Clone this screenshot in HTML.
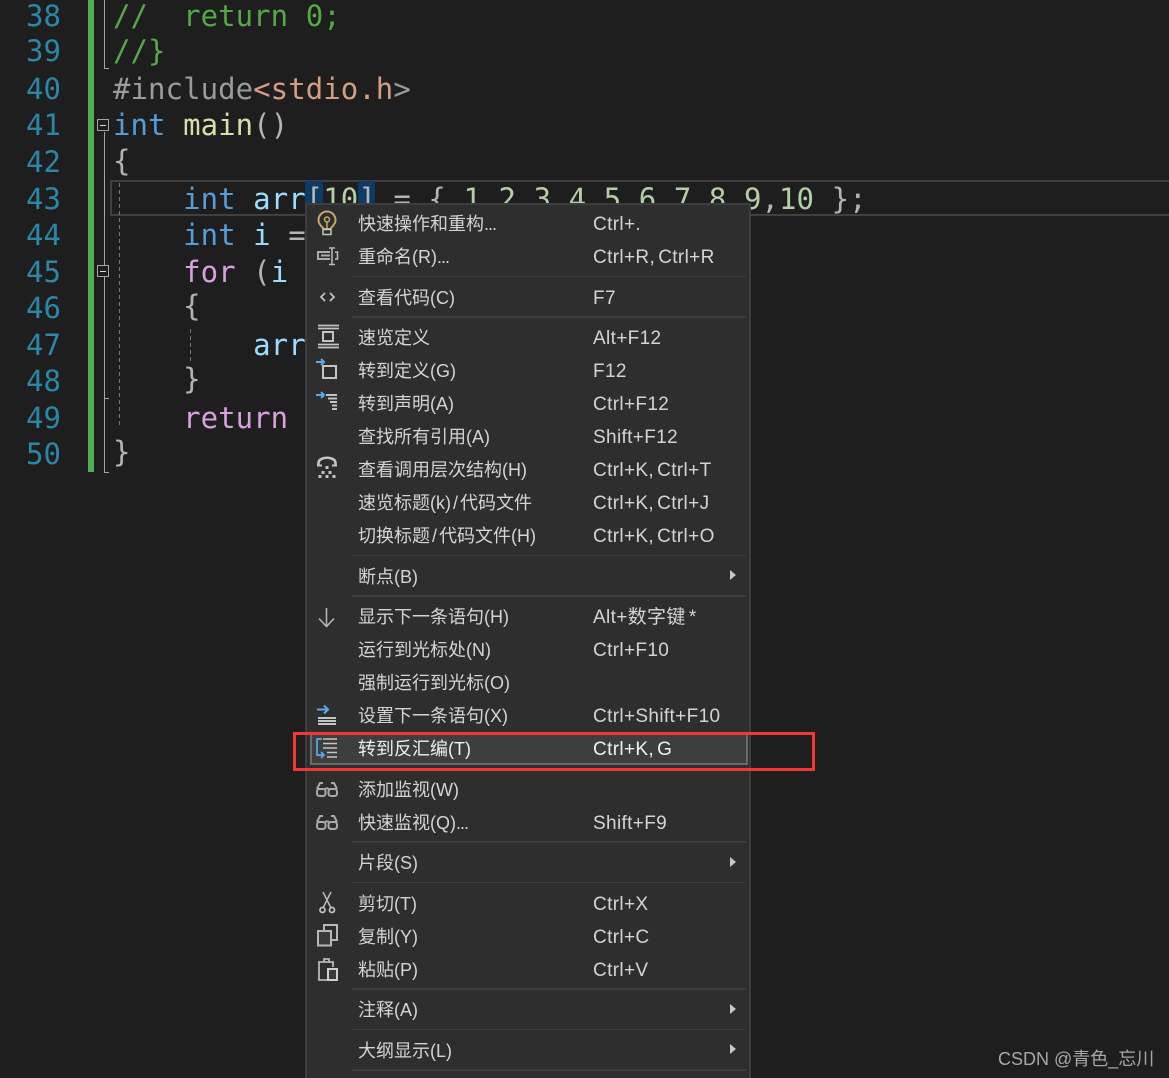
<!DOCTYPE html>
<html><head><meta charset="utf-8"><style>
html,body{margin:0;padding:0;background:#1e1e1e}
#p{position:relative;width:1169px;height:1078px;overflow:hidden;background:#1e1e1e}
.n,.c{position:absolute;font:29px/36px "DejaVu Sans Mono","Liberation Mono",monospace;white-space:pre;letter-spacing:.06px}
.n{left:26px;color:#2b87a8}
.c{left:113px;color:#dcdcdc}
.g{color:#57a64a}.b{color:#569cd6}.y{color:#dcdcaa}.v{color:#9cdcfe}.s{color:#d69d85}.h{color:#9b9b9b}.k{color:#d8a0df}.l{color:#b5cea8}.w{color:#b4b4b4}
.r{position:absolute;left:0;top:0;width:1169px;height:1078px;pointer-events:none}
#m{position:absolute;left:305px;top:203px;width:446px;height:880px;background:#2e2e2e;border-left:2px solid #3d3d3d;border-right:2px solid #3d3d3d;border-top:2px solid #3d3d3d;box-sizing:border-box}
.t,.u{position:absolute;margin-top:1px;color:#d4d4d4;white-space:pre}
.t{left:358px;font:18px/33px "Liberation Sans","Noto Sans CJK SC",sans-serif}
.u{left:593px;font:19px/33px "Liberation Sans","Noto Sans CJK SC",sans-serif;letter-spacing:.35px;word-spacing:-2.500px}
.d{letter-spacing:-1px}.sl{margin:0 2px}
.sp{position:absolute;left:352px;width:394px;background:#3c3c3c}
.a{position:absolute;left:730px;width:0;height:0;border-left:6px solid #c8c8c8;border-top:5.500px solid transparent;border-bottom:5.500px solid transparent}
</style></head><body><div id="p">
<div style="position:absolute;left:88px;top:0;width:6px;height:472px;background:#4fb056"></div>
<div style="position:absolute;left:110px;top:180px;width:1059px;height:36px;border:2px solid #404040;box-sizing:border-box;border-right:0"></div>
<div style="position:absolute;left:305px;top:181px;width:18px;height:24px;background:#0e3b63"></div>
<div style="position:absolute;left:358px;top:181px;width:17px;height:24px;background:#0e3b63"></div>

<svg class="r" viewBox="0 0 1169 1078" fill="none" stroke="#a5a5a5" stroke-width="1">
<path d="M104.500 0V68.500H109M104.500 132V472.500H109M104.500 398.500H109"/>
<rect x="97.500" y="119.500" width="11" height="11" fill="#1e1e1e" stroke="#a5a5a5"/><path d="M100 125.500H106" stroke="#ddd"/>
<rect x="97.500" y="265.500" width="11" height="11" fill="#1e1e1e" stroke="#a5a5a5"/><path d="M100 271.500H106" stroke="#ddd"/>
<path d="M119.500 183V428M190.500 329V364" stroke="#777" stroke-dasharray="4 3"/>
</svg>

<div class="n" style="top:-2px">38</div><div class="c g" style="top:-2px">//  return 0;</div>
<div class="n" style="top:33px">39</div><div class="c g" style="top:33px">//}</div>
<div class="n" style="top:71px">40</div><div class="c" style="top:71px"><span class="h">#include</span><span class="s">&lt;stdio.h</span><span class="h">&gt;</span></div>
<div class="n" style="top:107px">41</div><div class="c" style="top:107px"><span class="b">int</span> <span class="y">main</span><span class="w">()</span></div>
<div class="n" style="top:144px">42</div><div class="c w" style="top:143px">{</div>
<div class="n" style="top:181px">43</div><div class="c" style="top:181px">    <span class="b">int</span> <span class="v">arr</span><span class="w">[</span><span class="l">10</span><span class="w">] = { </span><span class="l">1</span><span class="w">,</span><span class="l">2</span><span class="w">,</span><span class="l">3</span><span class="w">,</span><span class="l">4</span><span class="w">,</span><span class="l">5</span><span class="w">,</span><span class="l">6</span><span class="w">,</span><span class="l">7</span><span class="w">,</span><span class="l">8</span><span class="w">,</span><span class="l">9</span><span class="w">,</span><span class="l">10</span><span class="w"> };</span></div>
<div class="n" style="top:217px">44</div><div class="c" style="top:217px">    <span class="b">int</span> <span class="v">i</span> <span class="w">=</span></div>
<div class="n" style="top:254px">45</div><div class="c" style="top:254px">    <span class="k">for</span> <span class="w">(</span><span class="v">i</span></div>
<div class="n" style="top:290px">46</div><div class="c w" style="top:288px">    {</div>
<div class="n" style="top:327px">47</div><div class="c v" style="top:327px">        arr</div>
<div class="n" style="top:363px">48</div><div class="c w" style="top:361px">    }</div>
<div class="n" style="top:400px">49</div><div class="c k" style="top:400px">    return</div>
<div class="n" style="top:436px">50</div><div class="c w" style="top:434px">}</div>

<div id="m"></div>
<div style="position:absolute;left:310px;top:733px;width:438px;height:32px;box-sizing:border-box;background:#3e3e3e;border:2px solid #6a6a6a"></div>

<div class="sp" style="top:276px;height:1px"></div>
<div class="sp" style="top:316px;height:2px"></div>
<div class="sp" style="top:555px;height:1px"></div>
<div class="sp" style="top:595px;height:2px"></div>
<div class="sp" style="top:841px;height:2px"></div>
<div class="sp" style="top:882px;height:1px"></div>
<div class="sp" style="top:988px;height:2px"></div>
<div class="sp" style="top:1029px;height:1px"></div>
<div class="sp" style="top:1069px;height:2px"></div>

<div class="t" style="top:207px">快速操作和重构<span class="d">...</span></div><div class="u" style="top:207px">Ctrl+.</div>
<div class="t" style="top:240px">重命名(R)<span class="d">...</span></div><div class="u" style="top:240px">Ctrl+R, Ctrl+R</div>
<div class="t" style="top:281px">查看代码(C)</div><div class="u" style="top:281px">F7</div>
<div class="t" style="top:321px">速览定义</div><div class="u" style="top:321px">Alt+F12</div>
<div class="t" style="top:354px">转到定义(G)</div><div class="u" style="top:354px">F12</div>
<div class="t" style="top:387px">转到声明(A)</div><div class="u" style="top:387px">Ctrl+F12</div>
<div class="t" style="top:420px">查找所有引用(A)</div><div class="u" style="top:420px">Shift+F12</div>
<div class="t" style="top:453px">查看调用层次结构(H)</div><div class="u" style="top:453px">Ctrl+K, Ctrl+T</div>
<div class="t" style="top:486px">速览标题(k)<span class="sl">/</span>代码文件</div><div class="u" style="top:486px">Ctrl+K, Ctrl+J</div>
<div class="t" style="top:519px">切换标题<span class="sl">/</span>代码文件(H)</div><div class="u" style="top:519px">Ctrl+K, Ctrl+O</div>
<div class="t" style="top:560px">断点(B)</div><div class="a" style="top:570px"></div>
<div class="t" style="top:600px">显示下一条语句(H)</div><div class="u" style="top:600px">Alt+数字键 *</div>
<div class="t" style="top:633px">运行到光标处(N)</div><div class="u" style="top:633px">Ctrl+F10</div>
<div class="t" style="top:666px">强制运行到光标(O)</div>
<div class="t" style="top:699px">设置下一条语句(X)</div><div class="u" style="top:699px">Ctrl+Shift+F10</div>
<div class="t" style="top:732px;color:#f0f0f0">转到反汇编(T)</div><div class="u" style="top:732px;color:#f0f0f0">Ctrl+K, G</div>
<div class="t" style="top:773px">添加监视(W)</div>
<div class="t" style="top:806px">快速监视(Q)<span class="d">...</span></div><div class="u" style="top:806px">Shift+F9</div>
<div class="t" style="top:846px">片段(S)</div><div class="a" style="top:857px"></div>
<div class="t" style="top:887px">剪切(T)</div><div class="u" style="top:887px">Ctrl+X</div>
<div class="t" style="top:920px">复制(Y)</div><div class="u" style="top:920px">Ctrl+C</div>
<div class="t" style="top:953px">粘贴(P)</div><div class="u" style="top:953px">Ctrl+V</div>
<div class="t" style="top:993px">注释(A)</div><div class="a" style="top:1004px"></div>
<div class="t" style="top:1034px">大纲显示(L)</div><div class="a" style="top:1044px"></div>

<svg class="r" viewBox="0 0 1169 1078" fill="none" stroke="#c4c4c4" stroke-width="2">
<!-- bulb -->
<path d="M323.500 229c-1-2.500-5-4-5-9a8.500 8.500 0 0 1 17 0c0 5-4 6.500-5 9z" stroke="#c5a86f" stroke-width="2"/>
<circle cx="327" cy="219.500" r="2.500" stroke="#c5a86f" stroke-width="1.500"/>
<path d="M327 222v7" stroke="#c5a86f" stroke-width="1.500"/>
<rect x="323" y="229.500" width="8" height="5" stroke-width="1.500"/>
<!-- rename -->
<path d="M330 252H318v7h12M321 255.500h9" stroke="#aaa"/>
<path d="M329 248h6M329 264.500h6M332 248v16M335 252h2.500v7H335" stroke="#bbb" stroke-width="1.500"/>
<!-- code -->
<path d="M325 293l-4 4 4 4M330 293l4 4-4 4" stroke-width="1.700"/>
<!-- peek -->
<path d="M318 325.500h21M318 328.500h21M318 344.500h21M318 347.500h21" stroke-width="1.700"/>
<rect x="323" y="332" width="10" height="9"/>
<!-- go to definition -->
<rect x="323" y="366" width="13" height="12"/>
<path d="M316 362h8M321 359l3 3-3 3" stroke="#5ba8ee"/>
<!-- go to declaration -->
<path d="M316 395h8M321 392l3 3-3 3" stroke="#5ba8ee"/>
<path d="M326 395h11M328 398.500h9M330 402h7M332 405.500h5M332 409h5"/>
<!-- call hierarchy -->
<path d="M318.500 465v-2c0-7 17-7 17 0v2" stroke-width="2.600"/>
<path d="M317 465.500h5M332 465.500h5" stroke-width="2"/>
<g fill="#c4c4c4" stroke="none"><rect x="325.500" y="466" width="3" height="3"/><rect x="321.500" y="471" width="3" height="3"/><rect x="328.500" y="471" width="3" height="3"/><rect x="318.500" y="475" width="3" height="3"/><rect x="325.500" y="475" width="3" height="3"/><rect x="332.500" y="475" width="3" height="3"/></g>
<!-- arrow down -->
<path d="M326.500 608v18M319 618.500l7.500 8 7.500-8" stroke="#b8b8b8" stroke-width="1.500"/>
<!-- set next -->
<path d="M317 709.500h11M324 705.500l4 4-4 4" stroke="#5ba8ee"/>
<path d="M318 718h18M318 721h18M318 724h18"/>
<!-- disasm -->
<path d="M322 739h-5v16h7M321 752l3 3-3 3" stroke="#5ba8ee" stroke-width="1.700"/>
<path d="M323 739h14M323 743.500h14M323 748h14M327 752.500h10M327 757h10" stroke-width="1.500"/>
<!-- glasses -->
<g stroke="#aaa"><path d="M325 789.500c1-1.500 3-1.500 4 0M317 789l3-6h3M337 789l-3-6h-3"/><rect x="317" y="789" width="8.500" height="7" rx="2.500"/><rect x="328.500" y="789" width="8.500" height="7" rx="2.500"/></g>
<g stroke="#aaa"><path d="M325 822.500c1-1.500 3-1.500 4 0M317 822l3-6h3M337 822l-3-6h-3"/><rect x="317" y="822" width="8.500" height="7" rx="2.500"/><rect x="328.500" y="822" width="8.500" height="7" rx="2.500"/></g>
<!-- scissors -->
<path d="M323 892l8 16M331 892l-8 16" stroke="#bbb" stroke-width="1.500"/>
<circle cx="322.500" cy="910" r="2.500" stroke-width="1.700"/><circle cx="332" cy="910" r="2.500" stroke-width="1.700"/>
<!-- copy -->
<path d="M324 930v-5h13v15h-6" stroke="#b8b8b8"/>
<rect x="318" y="931" width="13" height="14.500" fill="#3a3a3a" stroke="#b8b8b8"/>
<!-- paste -->
<path d="M327 980h-8v-18h14v5M324 962v-3h5v3" stroke="#b8b8b8" stroke-width="1.800"/>
<rect x="328" y="969" width="9" height="11" fill="#3a3a3a" stroke="#d0d0d0"/>
</svg>

<div style="position:absolute;left:293px;top:732px;width:522px;height:39px;box-sizing:border-box;border:3px solid #f33636"></div>
<div style="position:absolute;left:998px;top:1048px;font:18px/22px 'Liberation Sans','Noto Sans CJK SC',sans-serif;color:#a8a8a8;white-space:pre">CSDN @青色_忘川</div>
</div></body></html>
